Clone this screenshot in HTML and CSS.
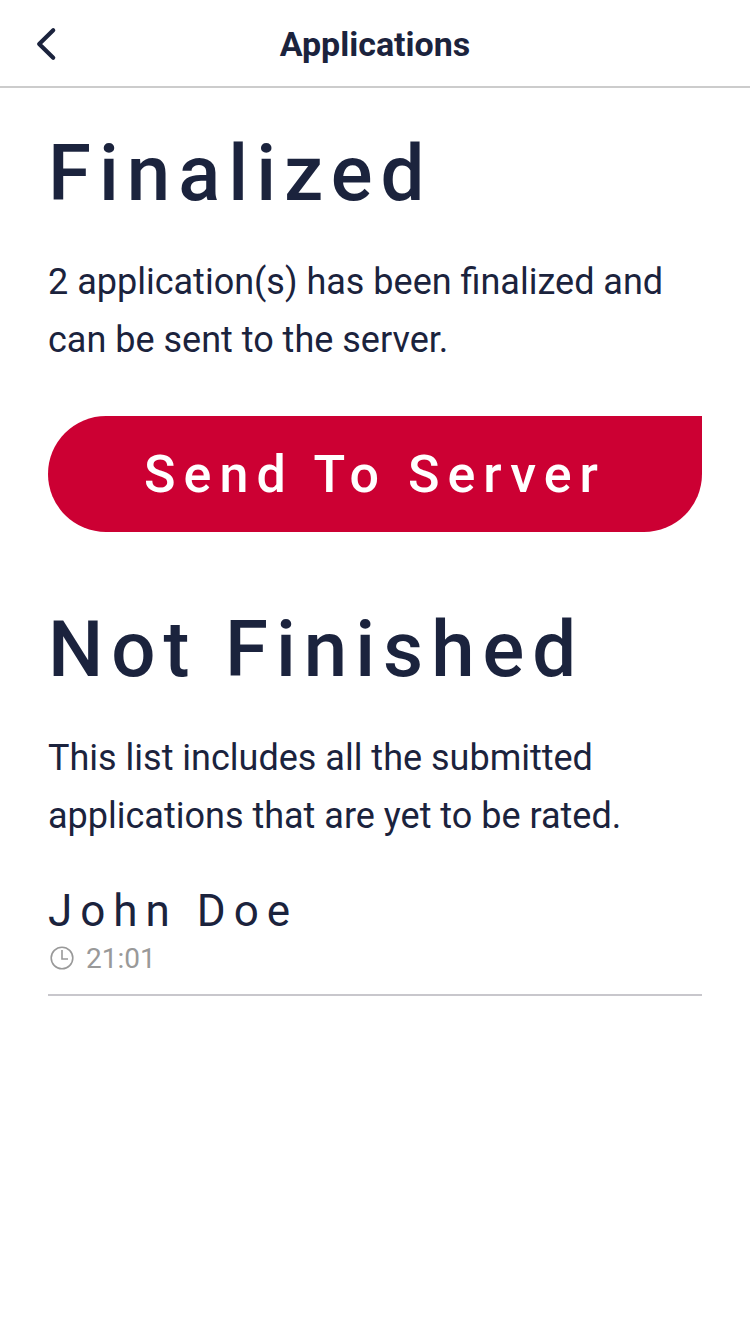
FILE: index.html
```html
<!DOCTYPE html>
<html lang="en">
<head>
<meta charset="utf-8">
<title>Applications</title>
<link rel="stylesheet" href="styles.css">
</head>
<body>
<header class="navbar">
  <svg class="back" width="22" height="34" viewBox="0 0 22 34" aria-label="Back"><path d="M17.2 3.2 3.2 17l14 13.8" /></svg>
  <h1 class="navbar-title">Applications</h1>
</header>
<main class="content">
  <section class="section">
    <h2 class="heading">Finalized</h2>
    <p class="text">2 application(s) has been finalized and can be sent to the server.</p>
    <button class="send">Send To Server</button>
  </section>
  <section class="section">
    <h2 class="heading">Not Finished</h2>
    <p class="text">This list includes all the submitted applications that are yet to be rated.</p>
    <article class="item">
      <h3 class="name">John Doe</h3>
      <div class="meta">
        <svg class="clock" width="24" height="24" viewBox="0 0 24 24"><circle cx="12" cy="12" r="10.8"/><path d="M12 4v9h6"/></svg>
        <time>21:01</time>
      </div>
    </article>
  </section>
</main>
</body>
</html>
```
FILE: styles.css
```css
* { box-sizing: border-box; margin: 0; padding: 0; }
body { background: #fff; color: #1b233d; font-family: Roboto, sans-serif; }
.navbar { height: 88px; border-bottom: 2px solid #ccc; display: grid; grid-template-columns: 1fr auto 1fr; align-items: center; padding: 2px 36px 0; }
.back { fill: none; stroke: #1b233d; stroke-width: 4.2; stroke-linecap: round; stroke-linejoin: round; }
.navbar-title { font-size: 34px; line-height: 40px; font-weight: 700; }
.content { padding: 34px 48px 0; }
.heading { font-size: 78px; line-height: 104px; font-weight: 500; letter-spacing: 8px; }
.text { font-size: 36px; line-height: 58px; margin-top: 27px; }
.send { display: block; width: 100%; height: 116px; margin: 47px 0 66px; padding-top: 1px; border: 0; border-radius: 58px 0 58px 58px; background: #cc0033; color: #fff; font: 500 52px/60px Roboto, sans-serif; letter-spacing: 8px; }
.item { margin-top: 36px; border-bottom: 2px solid #c8c7cc; height: 115px; }
.name { font-size: 44px; line-height: 60px; font-weight: 400; letter-spacing: 8px; }
.meta { display: flex; align-items: center; gap: 12px; padding-left: 2px; font-size: 28px; line-height: 36px; color: #999; }
.clock { fill: none; stroke: #999; stroke-width: 1.6; margin-bottom: 2px; }
```
